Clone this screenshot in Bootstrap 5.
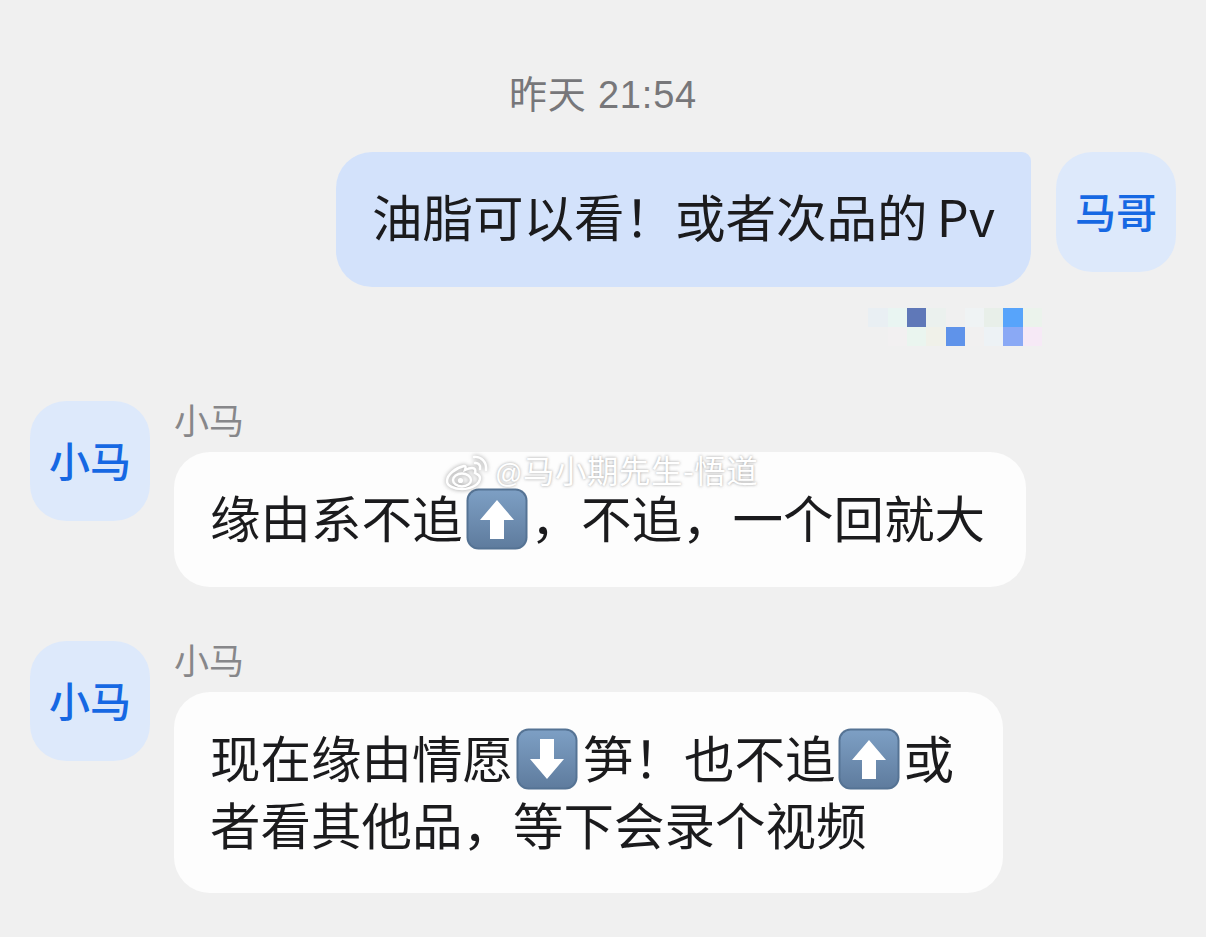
<!DOCTYPE html>
<html lang="zh-Hans">
	<head>
		<meta charset="utf-8">
		<meta name="viewport" content="width=device-width, initial-scale=1">
		<link href="https://cdn.jsdelivr.net/npm/bootstrap@5.3.3/dist/css/bootstrap.min.css" rel="stylesheet" crossorigin="anonymous">
		<script src="https://cdn.jsdelivr.net/npm/bootstrap@5.3.3/dist/js/bootstrap.bundle.min.js" crossorigin="anonymous"></script>
		<style>
			body {
				background: #f0f0f0;
				font-family: "Noto Sans CJK SC", "Liberation Sans", sans-serif;
				color: #1b1b1d;
				height: 937px;
				overflow: hidden;
			}
			.chat-page { position: relative; padding: 67px 30px 0; }
			.chat-time { height: 50px; line-height: 50px; margin-bottom: 35px; font-size: 38px; letter-spacing: .8px; color: #77777a; font-family: "Liberation Sans", "Noto Sans CJK SC", sans-serif; }
			.chat-time span { font-family: "Noto Sans CJK SC", sans-serif; }
			.chat-avatar { width: 120px; height: 120px; padding-bottom: 2px; border-radius: 36px; background: #dde9fb; color: #1668e3; font-size: 41px; font-weight: 500; flex: none; }
			.chat-bubble { font-size: 50.5px; line-height: 68px; padding: 29px 36px 38px 36px; border-radius: 36px; white-space: nowrap; word-spacing: -2px; }
			.bubble-mine { background: #d3e2fb; border-top-right-radius: 9px; margin-right: 25px; }
			.bubble-other { background: #fdfdfd; padding-top: 30px; padding-bottom: 37px; }
			.bubble-long { line-height: 67px; padding-top: 31px; padding-right: 49px; padding-bottom: 36px; }
			.bubble-short-pad { padding-right: 41px; }
			.chat-name { height: 40px; line-height: 36px; margin-bottom: 11px; font-size: 35px; color: #87878a; }
			.chat-gap { margin-right: 24px; }
			.chat-left-row { margin-bottom: 54px; }
			.mosaic-strip { display: grid; grid-template-columns: repeat(9, 19.3px); grid-auto-rows: 19px; margin: 21px 134px 55px 0; }
			.emoji-key { width: 62px; height: 62px; vertical-align: -2px; margin: -10px 4px -10px 2px; }
			.emoji-key.after-wide { margin-right: 3px; margin-left: 3px; }
			.emoji-key.tight { margin: -10px 5px -10px 3px; }
			.wb-mark { position: absolute; left: 445px; top: 450px; display: flex; align-items: center; gap: 4px; color: #fff; font-size: 31.5px; letter-spacing: .5px; line-height: 38px; white-space: nowrap; text-shadow: 0 0 3px rgba(90,90,90,.6); }
			.wb-mark svg { width: 46px; height: 38px; filter: drop-shadow(0 0 2px rgba(90,90,90,.6)); }
			.wb-mark .wb-at { font-family: "Liberation Sans", sans-serif; font-size: 27px; }
		</style>
		<title>chat</title>
	</head>
	<body>
		<svg width="0" height="0" class="position-absolute">
			<defs>
				<linearGradient id="keyFill" x1="0" y1="0" x2="0" y2="1">
					<stop offset="0" stop-color="#7d9fc4"/>
					<stop offset="1" stop-color="#5f7c9e"/>
				</linearGradient>
				<symbol id="keyUp" viewBox="0 0 62 62">
					<rect x="0.5" y="0.5" width="61" height="61" rx="12" fill="#557394"/>
					<rect x="2.5" y="2.5" width="57" height="57" rx="10" fill="url(#keyFill)"/>
					<path d="M31 12 L48 32 H38 V51 H24 V32 H14 Z" fill="#fff"/>
				</symbol>
				<symbol id="keyDown" viewBox="0 0 62 62">
					<rect x="0.5" y="0.5" width="61" height="61" rx="12" fill="#557394"/>
					<rect x="2.5" y="2.5" width="57" height="57" rx="10" fill="url(#keyFill)"/>
					<path d="M24 11 H38 V31 H48 L31 51 L14 31 H24 Z" fill="#fff"/>
				</symbol>
			</defs>
		</svg>

		<div class="chat-page">
			<div class="chat-time text-center"><span>昨天</span> 21:54</div>

			<div class="d-flex justify-content-end align-items-start">
				<div class="chat-bubble bubble-mine">油脂可以看！或者次品的 Pv</div>
				<div class="chat-avatar d-flex align-items-center justify-content-center">马哥</div>
			</div>

			<div class="d-flex justify-content-end">
				<div class="mosaic-strip">
					<i style="background:#e9eff3"></i><i style="background:#e9f5f2"></i><i style="background:#5f78b8"></i><i style="background:#ebf1ee"></i><i style="background:#f0f0f0"></i><i style="background:#eff3f4"></i><i style="background:#e8efe9"></i><i style="background:#57a4fb"></i><i style="background:#ebf3ec"></i>
					<i style="background:#f0f0f0"></i><i style="background:#f2f0f1"></i><i style="background:#eaf5ef"></i><i style="background:#f0f1e9"></i><i style="background:#5f93ea"></i><i style="background:#f1f0f0"></i><i style="background:#edf2f5"></i><i style="background:#8aa9f5"></i><i style="background:#f6e9f6"></i>
				</div>
			</div>

			<div class="d-flex align-items-start chat-left-row">
				<div class="chat-avatar chat-gap d-flex align-items-center justify-content-center">小马</div>
				<div>
					<div class="chat-name">小马</div>
					<div class="chat-bubble bubble-other bubble-short-pad">缘由系不追<svg class="emoji-key after-wide"><use href="#keyUp"/></svg>，不追，一个回就大</div>
				</div>
			</div>

			<div class="d-flex align-items-start chat-left-row">
				<div class="chat-avatar chat-gap d-flex align-items-center justify-content-center">小马</div>
				<div>
					<div class="chat-name">小马</div>
					<div class="chat-bubble bubble-other bubble-long">现在缘由情愿<svg class="emoji-key tight"><use href="#keyDown"/></svg>笋！也不追<svg class="emoji-key"><use href="#keyUp"/></svg>或<br>者看其他品，等下会录个视频</div>
				</div>
			</div>

			<div class="wb-mark">
				<svg viewBox="0 0 46 38" fill="none" stroke="#fff" stroke-width="2.4" stroke-linecap="round">
					<path d="M19 13 C10 15 2 22 2 28 C2 33 9 36 17 36 C27 36 35 31 35 25 C35 22 32 21 30 20 C31 17 30 15 27 15 C24 15 22 16 20 17 C21 14 21 13 19 13 Z"/>
					<ellipse cx="17" cy="27" rx="9" ry="6.5"/>
					<circle cx="15.5" cy="27.5" r="2.6" fill="#fff" stroke="none"/>
					<path d="M29 4 C36 3 42 9 41 17"/>
					<path d="M30 10 C33 9.500 36 12 35 16"/>
				</svg>
				<div><span class="wb-at">@</span>马小期先生-悟道</div>
			</div>
		</div>
	</body>
</html>
